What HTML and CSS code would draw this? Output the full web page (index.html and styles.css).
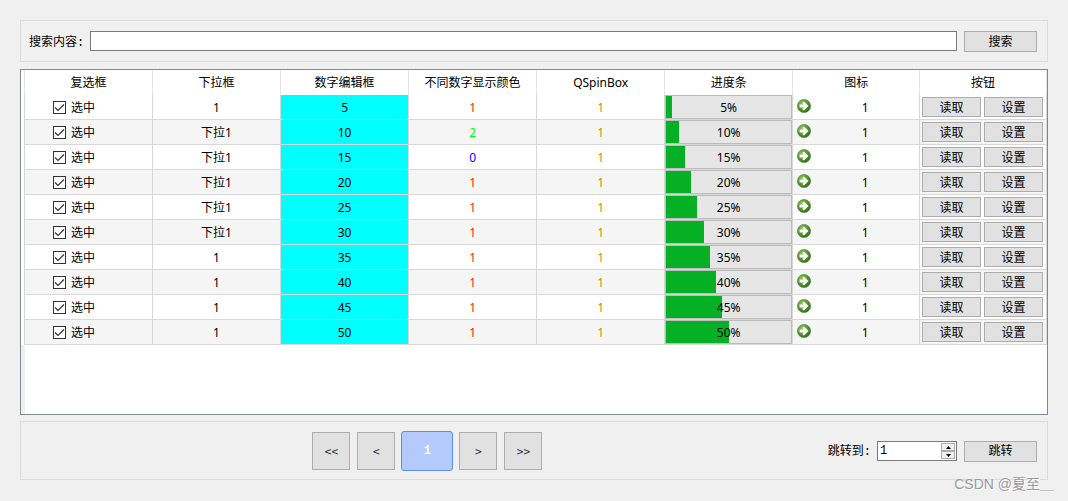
FILE: index.html
```html
<!DOCTYPE html>
<html lang="zh-CN">
<head>
<meta charset="utf-8">
<meta name="viewport" content="width=device-width, initial-scale=1">
<title>QTableView</title>
<link rel="stylesheet" href="styles.css">
</head>
<body>
<svg class="defs" aria-hidden="true">
  <defs>
    <radialGradient id="ball" cx="0.35" cy="0.3" r="0.75">
      <stop offset="0" stop-color="#8cc152"/>
      <stop offset="0.5" stop-color="#5c9c30"/>
      <stop offset="1" stop-color="#2c6e16"/>
    </radialGradient>
    <symbol id="go" viewBox="0 0 14 14">
      <circle cx="7" cy="7" r="6.6" fill="url(#ball)" stroke="#4d7f3a" stroke-width="0.6"/>
      <path d="M2.6 5.5H6.6L5.2 4.1L6.8 2.5L11.5 7L6.8 11.5L5.2 9.9L6.6 8.5H2.6Z" fill="#fff"/>
    </symbol>
  </defs>
</svg>
<main class="page">
  <form class="group search">
    <label for="keyword">搜索内容:</label>
    <input class="field search-field" id="keyword" type="text">
    <button class="btn action" type="button">搜索</button>
  </form>

  <div class="table-frame">
    <table class="grid">
      <colgroup><col class="col-edge"><col class="col" span="6"><col span="2"></colgroup>
      <thead>
        <tr><th class="edge"></th><th>复选框</th><th>下拉框</th><th>数字编辑框</th><th>不同数字显示颜色</th><th>QSpinBox</th><th>进度条</th><th>图标</th><th>按钮</th></tr>
      </thead>
      <tbody>
        <tr><th class="edge"></th><td class="flush"><label class="check"><input type="checkbox" checked><span>选中</span></label></td><td>1</td><td class="edit">5</td><td class="red">1</td><td class="spin">1</td><td class="flush"><div class="bar"><div class="fill" style="width:5%"></div><span class="pct">5%</span></div></td><td class="flush"><div class="mark"><svg class="go"><use href="#go"/></svg><span>1</span></div></td><td class="flush"><div class="pair"><button class="btn" type="button">读取</button><button class="btn" type="button">设置</button></div></td></tr>
        <tr><th class="edge"></th><td class="flush"><label class="check"><input type="checkbox" checked><span>选中</span></label></td><td>下拉1</td><td class="edit">10</td><td class="green">2</td><td class="spin">1</td><td class="flush"><div class="bar"><div class="fill" style="width:10%"></div><span class="pct">10%</span></div></td><td class="flush"><div class="mark"><svg class="go"><use href="#go"/></svg><span>1</span></div></td><td class="flush"><div class="pair"><button class="btn" type="button">读取</button><button class="btn" type="button">设置</button></div></td></tr>
        <tr><th class="edge"></th><td class="flush"><label class="check"><input type="checkbox" checked><span>选中</span></label></td><td>下拉1</td><td class="edit">15</td><td class="blue">0</td><td class="spin">1</td><td class="flush"><div class="bar"><div class="fill" style="width:15%"></div><span class="pct">15%</span></div></td><td class="flush"><div class="mark"><svg class="go"><use href="#go"/></svg><span>1</span></div></td><td class="flush"><div class="pair"><button class="btn" type="button">读取</button><button class="btn" type="button">设置</button></div></td></tr>
        <tr><th class="edge"></th><td class="flush"><label class="check"><input type="checkbox" checked><span>选中</span></label></td><td>下拉1</td><td class="edit">20</td><td class="red">1</td><td class="spin">1</td><td class="flush"><div class="bar"><div class="fill" style="width:20%"></div><span class="pct">20%</span></div></td><td class="flush"><div class="mark"><svg class="go"><use href="#go"/></svg><span>1</span></div></td><td class="flush"><div class="pair"><button class="btn" type="button">读取</button><button class="btn" type="button">设置</button></div></td></tr>
        <tr><th class="edge"></th><td class="flush"><label class="check"><input type="checkbox" checked><span>选中</span></label></td><td>下拉1</td><td class="edit">25</td><td class="red">1</td><td class="spin">1</td><td class="flush"><div class="bar"><div class="fill" style="width:25%"></div><span class="pct">25%</span></div></td><td class="flush"><div class="mark"><svg class="go"><use href="#go"/></svg><span>1</span></div></td><td class="flush"><div class="pair"><button class="btn" type="button">读取</button><button class="btn" type="button">设置</button></div></td></tr>
        <tr><th class="edge"></th><td class="flush"><label class="check"><input type="checkbox" checked><span>选中</span></label></td><td>下拉1</td><td class="edit">30</td><td class="red">1</td><td class="spin">1</td><td class="flush"><div class="bar"><div class="fill" style="width:30%"></div><span class="pct">30%</span></div></td><td class="flush"><div class="mark"><svg class="go"><use href="#go"/></svg><span>1</span></div></td><td class="flush"><div class="pair"><button class="btn" type="button">读取</button><button class="btn" type="button">设置</button></div></td></tr>
        <tr><th class="edge"></th><td class="flush"><label class="check"><input type="checkbox" checked><span>选中</span></label></td><td>1</td><td class="edit">35</td><td class="red">1</td><td class="spin">1</td><td class="flush"><div class="bar"><div class="fill" style="width:35%"></div><span class="pct">35%</span></div></td><td class="flush"><div class="mark"><svg class="go"><use href="#go"/></svg><span>1</span></div></td><td class="flush"><div class="pair"><button class="btn" type="button">读取</button><button class="btn" type="button">设置</button></div></td></tr>
        <tr><th class="edge"></th><td class="flush"><label class="check"><input type="checkbox" checked><span>选中</span></label></td><td>1</td><td class="edit">40</td><td class="red">1</td><td class="spin">1</td><td class="flush"><div class="bar"><div class="fill" style="width:40%"></div><span class="pct">40%</span></div></td><td class="flush"><div class="mark"><svg class="go"><use href="#go"/></svg><span>1</span></div></td><td class="flush"><div class="pair"><button class="btn" type="button">读取</button><button class="btn" type="button">设置</button></div></td></tr>
        <tr><th class="edge"></th><td class="flush"><label class="check"><input type="checkbox" checked><span>选中</span></label></td><td>1</td><td class="edit">45</td><td class="red">1</td><td class="spin">1</td><td class="flush"><div class="bar"><div class="fill" style="width:45%"></div><span class="pct">45%</span></div></td><td class="flush"><div class="mark"><svg class="go"><use href="#go"/></svg><span>1</span></div></td><td class="flush"><div class="pair"><button class="btn" type="button">读取</button><button class="btn" type="button">设置</button></div></td></tr>
        <tr><th class="edge"></th><td class="flush"><label class="check"><input type="checkbox" checked><span>选中</span></label></td><td>1</td><td class="edit">50</td><td class="red">1</td><td class="spin">1</td><td class="flush"><div class="bar"><div class="fill" style="width:50%"></div><span class="pct">50%</span></div></td><td class="flush"><div class="mark"><svg class="go"><use href="#go"/></svg><span>1</span></div></td><td class="flush"><div class="pair"><button class="btn" type="button">读取</button><button class="btn" type="button">设置</button></div></td></tr>
      </tbody>
    </table>
  </div>

  <form class="group pager">
    <nav class="pages">
      <button class="btn page-btn" type="button">&lt;&lt;</button>
      <button class="btn page-btn" type="button">&lt;</button>
      <button class="page-current" type="button">1</button>
      <button class="btn page-btn" type="button">&gt;</button>
      <button class="btn page-btn" type="button">&gt;&gt;</button>
    </nav>
    <label for="target">跳转到:</label>
    <div class="field spinbox">
      <input class="spin-input" id="target" type="number" value="1" min="1">
      <div class="steps">
        <button class="step" type="button" aria-label="增加"><svg class="tri" viewBox="0 0 5 3"><path d="M0 3L2.5 0L5 3Z"/></svg></button>
        <button class="step" type="button" aria-label="减少"><svg class="tri" viewBox="0 0 5 3"><path d="M0 0H5L2.5 3Z"/></svg></button>
      </div>
    </div>
    <button class="btn action" type="button">跳转</button>
  </form>
</main>
<div class="watermark">CSDN @夏至＿</div>
</body>
</html>
```
FILE: styles.css
```css
* {
  box-sizing: border-box;
}

body {
  margin: 0;
  background: #f0f0f0;
  color: #000;
  font: 12px/16px "Noto Sans", "Noto Sans CJK SC", sans-serif;
}

button,
input {
  font: inherit;
  color: inherit;
  margin: 0;
}

.defs {
  position: absolute;
  width: 0;
  height: 0;
}

.page {
  display: flex;
  flex-direction: column;
  min-height: 100vh;
  padding: 20px 20px 21px;
}

.group {
  display: flex;
  align-items: center;
  gap: 6px;
  border: 1px solid #dcdcdc;
  font-family: "Liberation Mono", "Noto Sans CJK SC", monospace;
}

.group label {
  padding-top: 2px;
}

.search {
  align-items: flex-start;
  padding: 10px 10px 9px 8px;
  margin-bottom: 7px;
}

.search label {
  padding-top: 4px;
}

.pager {
  padding: 9px 10px 8px 12px;
  margin-top: 6px;
}

.btn {
  padding: 0;
  border: 1px solid #adadad;
  background: #e1e1e1;
}

.action {
  width: 73px;
  height: 21px;
  margin-left: 1px;
  padding-top: 2px;
}

.field {
  height: 20px;
  border: 1px solid #7a7a7a;
  background: #fff;
}

.search-field {
  flex: 1;
  min-width: 0;
  padding: 0 2px;
}

.table-frame {
  flex: 1;
  border: 1px solid #828790;
  background: linear-gradient(to right, #f0f0f0 4px, #fff 4px);
}

.grid {
  width: 100%;
  table-layout: fixed;
  border-collapse: separate;
  border-spacing: 0;
  text-align: center;
}

.col-edge {
  width: 4px;
}

.col {
  width: 12.48%;
}

.grid th,
.grid td {
  height: 25px;
  padding: 2px 0 0;
  border-right: 1px solid #d8d8d8;
  font-weight: 400;
}

.grid thead th {
  padding: 0;
  background: #fff;
  border-color: #e5e5e5;
}

.grid td {
  border-bottom: 1px solid #d8d8d8;
  background: #fff;
}

.grid .flush {
  padding: 0;
}

.grid tr:nth-child(even) td {
  background: #f5f5f5;
}

.grid .edge {
  background: #fff;
}

.grid tr td.edit {
  background: #00ffff;
}

.red {
  color: #ff2400;
}

.green {
  color: #00ff00;
}

.blue {
  color: #0000ff;
}

.spin {
  color: #b89600;
}

.check {
  display: flex;
  align-items: center;
  gap: 5px;
  padding-left: 28px;
}

.check span,
.pct,
.mark span {
  padding-top: 2px;
}

.check input {
  appearance: none;
  width: 13px;
  height: 13px;
  border: 1px solid #333;
  background: #fff;
}

.check input:checked {
  background: #fff url("data:image/svg+xml,%3Csvg xmlns='http://www.w3.org/2000/svg' viewBox='0 0 11 11'%3E%3Cpath d='M1 5.5L4 8.5L10 2.5' fill='none' stroke='%23333' stroke-width='1.2'/%3E%3C/svg%3E");
}

.bar {
  display: grid;
  height: 24px;
  border: 1px solid #bcbcbc;
  background: #e6e6e6;
}

.fill,
.pct {
  grid-area: 1 / 1;
}

.fill {
  background: #06b025;
}

.pct {
  align-self: center;
}

.mark {
  display: flex;
  align-items: flex-start;
  padding-left: 4px;
}

.mark span {
  flex: 1;
}

.go {
  width: 14px;
  height: 14px;
  margin-top: 1px;
}

.pair {
  display: flex;
  gap: 3px;
  padding: 0 3px 0 2px;
}

.pair .btn {
  flex: 1;
  height: 20px;
  padding-top: 2px;
}

.pages {
  display: flex;
  flex: 1;
  align-items: center;
  justify-content: center;
  gap: 5px;
}

.page-btn {
  width: 38px;
  height: 38px;
  margin: 1px;
  color: #1c2c4c;
  font-family: "Noto Sans CJK SC", sans-serif;
}

.page-current {
  width: 52px;
  height: 40px;
  padding: 0;
  border: 1px solid #5b8cf5;
  border-radius: 3px;
  background: #b4c9fc;
  color: #fff;
  font-weight: 700;
}

.spinbox {
  display: flex;
  width: 80px;
  padding: 1px;
}

.spin-input {
  flex: 1;
  min-width: 0;
  padding: 0 1px;
  border: 0;
  background: none;
  appearance: textfield;
}

.spin-input::-webkit-inner-spin-button {
  appearance: none;
}

.steps {
  display: grid;
  grid-template-rows: 1fr 1fr;
  width: 14px;
}

.step {
  display: grid;
  place-items: center;
  min-height: 0;
  padding: 0;
  border: 1px solid #adadad;
  background: #f0f0f0;
}

.tri {
  width: 5px;
  height: 3px;
}

.watermark {
  position: absolute;
  right: 14px;
  bottom: 7px;
  color: #999;
  font: 14px/20px "Liberation Sans", "Noto Sans CJK SC", sans-serif;
  text-shadow: 1px 1px 0 #fff;
}
```
